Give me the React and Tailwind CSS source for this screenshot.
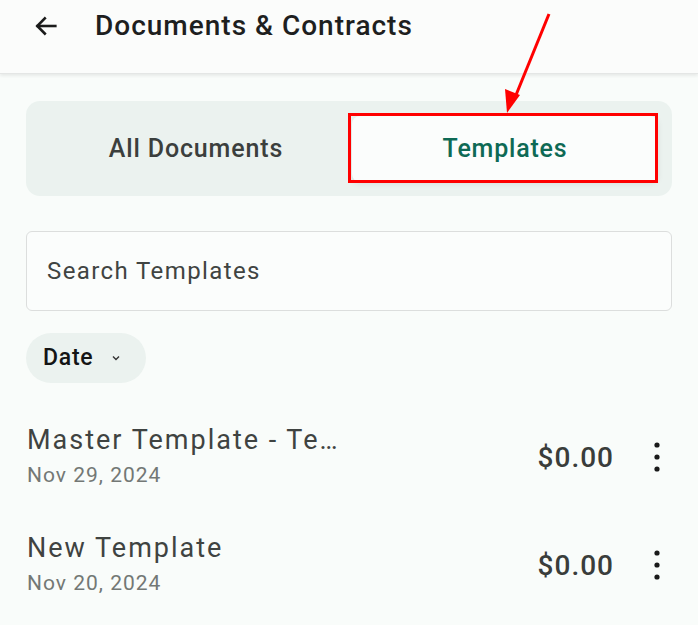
import React from "react";

function Dots() {
  return (
    <svg width="10" height="32" viewBox="0 0 10 32" className="text-[#1a1a1a] mt-[4px]">
      <circle cx="5" cy="4" r="2.6" fill="currentColor" />
      <circle cx="5" cy="16" r="2.6" fill="currentColor" />
      <circle cx="5" cy="28" r="2.6" fill="currentColor" />
    </svg>
  );
}

function Row({ title, date }) {
  return (
    <div className="flex items-center h-[108px] pl-[27px] pr-[36px]">
      <div className="flex-1 min-w-0 flex flex-col">
        <div className="text-[27px] leading-[34px] text-[#3f4341] tracking-[2px]">{title}</div>
        <div className="text-[21px] leading-[26px] text-[#737875] mt-[5px] tracking-[1px]">{date}</div>
      </div>
      <div className="text-[28px] font-medium text-[#3a3d3b] mr-[38px] tracking-[1px] mt-[6px]">$0.00</div>
      <Dots />
    </div>
  );
}

export default function App() {
  return (
    <div
      className="relative w-[698px] h-[625px] overflow-hidden bg-[#f9fcfa]"
      style={{ fontFamily: "Roboto, 'Noto Sans', sans-serif" }}
    >
      <header className="h-[74px] bg-[#fbfcfb] border-b border-[#e4e6e5] shadow-[0_2px_3px_rgba(0,0,0,0.07)]">
        <div className="h-[52px] flex items-center">
          <svg width="28" height="28" viewBox="0 0 24 24" className="ml-[32px] text-[#1b1b1b]" fill="none" stroke="currentColor" strokeWidth="2.2" strokeLinecap="square">
            <path d="M20 12H5" />
            <path d="M11 5.5 4.5 12l6.5 6.5" />
          </svg>
          <h1 className="ml-[35px] text-[28px] font-medium text-[#1e1f1f] tracking-[1px]">Documents &amp; Contracts</h1>
        </div>
      </header>

      <div className="px-[26px] pt-[27px]">
        <div className="h-[95px] rounded-[14px] bg-[#ebf2ef] flex items-center pl-[14px] pr-[14px]">
          <div className="flex-1 h-[66px] flex items-center justify-center text-[25px] font-medium text-[#3b3f3d] tracking-[0.85px]">All Documents</div>
          <div className="w-[306px] h-[66px] flex items-center justify-center text-[25px] font-medium text-[#0e6a55] bg-[#fbfdfc] rounded-[8px] shadow-[0_2px_6px_rgba(0,0,0,0.08)] tracking-[0.8px]">Templates</div>
        </div>

        <div className="mt-[35px] h-[80px] rounded-[6px] border-[1.5px] border-[#dcdedd] bg-[#fbfdfc] flex items-center pl-[20px] text-[24px] text-[#404442] tracking-[1.4px]">
          Search Templates
        </div>

        <div className="mt-[22px] inline-flex items-center h-[50px] pl-[17px] pr-[24px] rounded-full bg-[#ebf2ef]">
          <span className="text-[23px] font-medium text-[#141515] tracking-[0.75px]">Date</span>
          <svg width="12" height="12" viewBox="0 0 12 12" className="ml-[17px] text-[#333]" fill="none" stroke="currentColor" strokeWidth="1.4">
            <path d="M3 4.5 6 7.5 9 4.5" />
          </svg>
        </div>
      </div>

      <div className="mt-[18px]">
        <Row title="Master Template - Te…" date="Nov 29, 2024" />
        <Row title="New Template" date="Nov 20, 2024" />
      </div>

      <svg className="absolute left-0 top-0 pointer-events-none" width="698" height="625">
        <rect x="349.5" y="114.5" width="307" height="67" fill="none" stroke="#ff0000" strokeWidth="3" />
        <line x1="549" y1="14" x2="516" y2="95" stroke="#ff0000" strokeWidth="3" />
        <polygon points="507,113 505,89 520,95" fill="#ff0000" />
      </svg>
    </div>
  );
}
